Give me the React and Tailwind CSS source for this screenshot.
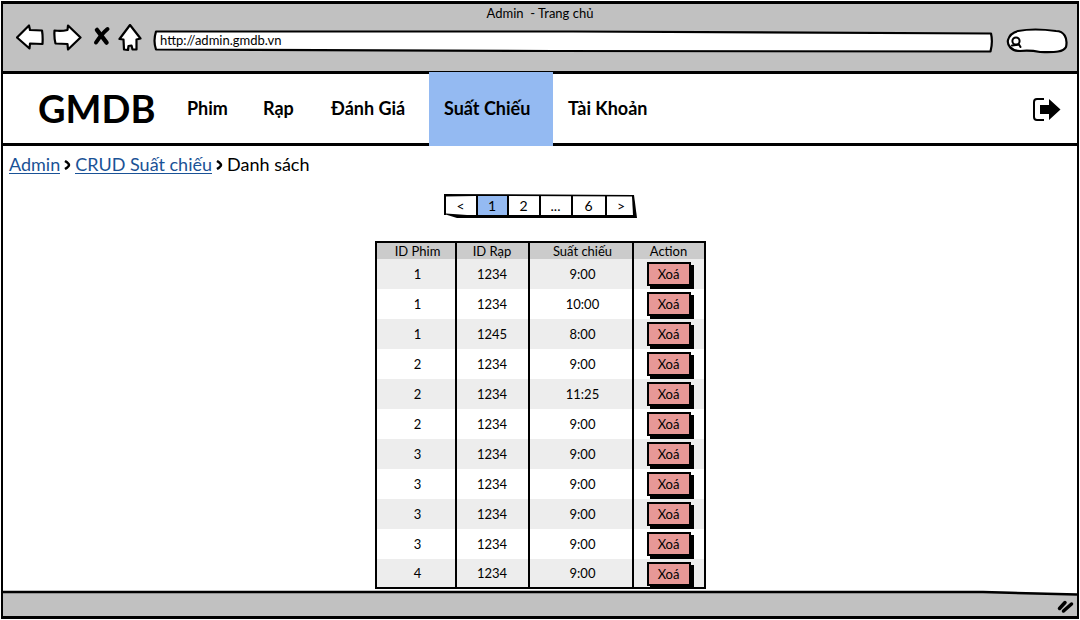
const pages = [
  { label: "<", width: "w-[32px]" },
  { label: "1", width: "w-[31px]", active: true },
  { label: "2", width: "w-[32px]" },
  { label: "...", width: "w-[32px]" },
  { label: "6", width: "w-[34px]" },
  { label: ">", width: "w-[31px]" },
];

const showings = [
  ["1", "1234", "9:00"],
  ["1", "1234", "10:00"],
  ["1", "1245", "8:00"],
  ["2", "1234", "9:00"],
  ["2", "1234", "11:25"],
  ["2", "1234", "9:00"],
  ["3", "1234", "9:00"],
  ["3", "1234", "9:00"],
  ["3", "1234", "9:00"],
  ["3", "1234", "9:00"],
  ["4", "1234", "9:00"],
];

const columnPadding = ["pl-1", "", "pl-1"];

const navItems = [
  { label: "Phim", width: "w-[76px]" },
  { label: "Rạp", width: "w-[68px]" },
  { label: "Đánh Giá", width: "w-[113px]" },
  { label: "Suất Chiếu", width: "w-[124px]", active: true },
  { label: "Tài Khoản", width: "w-[112px]" },
];

function ToolButton({ label, className, children }) {
  return (
    <button type="button" aria-label={label} className={`shrink-0 ${className}`}>
      {children}
    </button>
  );
}

function BrowserBar() {
  return (
    <header className="flex h-[70px] flex-col border-b-3 border-black bg-[#c1c1c1]">
      <h1 className="h-5 text-center text-[13px] leading-[18px] whitespace-pre">Admin  - Trang chủ</h1>
      <div className="flex items-start pr-[9px] pl-[13px]">
        <ToolButton label="Back" className="w-[28px]">
          <svg viewBox="0 0 28 28" className="block h-7 w-7" fill="#fff" stroke="#000" strokeWidth="2.2" strokeLinejoin="round">
            <path d="M1 13.500 13 1.500 14 6 26 6.500Q27 12 26.500 20L14 19.500 13.500 24.500Z" />
          </svg>
        </ToolButton>
        <ToolButton label="Forward" className="ml-[9px] w-[29px]">
          <svg viewBox="0 0 29 28" className="block h-7 w-[29px]" fill="#fff" stroke="#000" strokeWidth="2.2" strokeLinejoin="round">
            <path d="M1.500 6.500 Q8 7.500 14.500 6L15 1.500 27.500 13.500 15 25.500 14.500 20 2.500 19.500Q1 14 1.500 6.500Z" />
          </svg>
        </ToolButton>
        <ToolButton label="Stop" className="ml-[11px] w-[18px]">
          <svg viewBox="0 0 18 28" className="block h-7 w-[18px]" fill="none" stroke="#000" strokeLinecap="round">
            <path d="M4 6 13.500 18.500" strokeWidth="4.500" />
            <path d="M14.500 5Q9 9.500 3 18.500" strokeWidth="4" />
          </svg>
        </ToolButton>
        <ToolButton label="Home" className="ml-[7px] w-[24px]">
          <svg viewBox="0 0 24 28" className="block h-7 w-6" fill="#fff" stroke="#000" strokeWidth="2.2" strokeLinejoin="round">
            <path d="M12 1 1.500 15 5.500 15.500 6 25.500 10 26 10.500 22 13.500 21.500 14.500 25.500 18.500 25.500 18.500 15.500 22.500 14.500Z" />
          </svg>
        </ToolButton>
        <div className="relative mt-[6px] ml-[11px] h-[23px] flex-1">
          <svg viewBox="0 0 840 23" preserveAspectRatio="none" aria-hidden="true" className="absolute inset-0 h-full w-full">
            <path d="M3 1.500 420 1.500 838 3.500Q840 12 837.500 21.500L400 21 3 19.500Q0 11 3 1.500Z" fill="#fff" stroke="#000" strokeWidth="2.200" strokeLinejoin="round" />
          </svg>
          <input type="text" aria-label="Address" defaultValue="http://admin.gmdb.vn" className="relative block h-5 w-full bg-transparent pl-[7px] text-[13px] outline-none" />
        </div>
        <div className="relative mt-[4px] ml-[13px] h-[26px] w-[62px] shrink-0">
          <svg viewBox="0 0 62 26" aria-hidden="true" className="absolute inset-0 h-full w-full">
            <path d="M12 3Q28 0 50 3C58 3 62 10 60 19C57 25 46 24 34 24Q24 22 14 23C5 23 1 17 2 12Q4 5 12 3Z" fill="#fff" stroke="#000" strokeWidth="2.2" />
            <circle cx="10" cy="13" r="3.600" fill="none" stroke="#000" strokeWidth="2" />
            <path d="M6 17.500 13 16.500 14.500 19" fill="none" stroke="#000" strokeWidth="2" strokeLinecap="round" />
          </svg>
          <input type="search" aria-label="Search" className="relative block h-full w-full bg-transparent pr-2 pl-5 text-[13px] outline-none" />
        </div>
      </div>
    </header>
  );
}

function SiteNav() {
  return (
    <nav className="flex h-[72px] items-stretch border-b-3 border-black bg-white">
      <a href="#home" className="flex w-[169px] items-center pb-[2px] pl-[35px] text-[38px] leading-none font-bold">GMDB</a>
      {navItems.map((item) => (
        <a
          key={item.label}
          href="#section"
          className={`flex items-center pb-px pl-[15px] text-[18px] font-bold whitespace-nowrap ${item.width} ${item.active ? "-mt-[2px] -mb-[3px] bg-[#94baf2]" : ""}`}
        >
          {item.label}
        </a>
      ))}
      <button type="button" aria-label="Log out" className="mr-4 ml-auto">
        <svg viewBox="0 0 29 24" className="h-6 w-[29px]">
          <path d="M12 2H5Q2 2 2 5V20Q2 23 5 23H12" fill="none" stroke="#000" strokeWidth="2" />
          <path d="M8 8H17V2L28.500 12.500 17 23V17H8Z" />
        </svg>
      </button>
    </nav>
  );
}

function Breadcrumb() {
  return (
    <nav aria-label="Breadcrumb" className="flex h-9 items-center pl-[6px] text-[18px] leading-[18px]">
      <a href="#admin" className="border-b border-[#1a5296] text-[#1a5296]">Admin</a>
      <Chevron />
      <a href="#crud" className="border-b border-[#1a5296] text-[#1a5296]">CRUD Suất chiếu</a>
      <Chevron />
      <span>Danh sách</span>
    </nav>
  );
}

function Chevron() {
  return (
    <svg viewBox="0 0 7 10" aria-hidden="true" className="mx-1 mt-[2px] h-[10px] w-[7px]">
      <path d="M1 1Q5 3.500 5 5T1 9" fill="none" stroke="#000" strokeWidth="2.500" />
    </svg>
  );
}

function Pagination() {
  return (
    <div className="relative mt-[12px] flex h-[25px] w-[195px] pl-px">
      <svg viewBox="0 0 195 25" aria-hidden="true" className="absolute inset-0 h-full w-full">
        <path d="M1 0 191 1 194 24 14 24 1 20Z" />
        <path d="M3 2.500 33 2 189 2.500 190 21 24 21 3 19.500Z" fill="#fff" />
      </svg>
      {pages.map((page) => (
        <button
          key={page.label}
          type="button"
          className={`relative mt-[2px] h-[19px] border-l-2 border-black text-sm leading-[19px] first:border-l-0 ${page.width} ${page.active ? "bg-[#94baf2]" : ""}`}
        >
          {page.label}
        </button>
      ))}
    </div>
  );
}

function ShowingsTable() {
  return (
    <table className="mt-[22px] w-[331px] table-fixed border-separate border-spacing-0 border-2 border-black text-center text-[13px]">
      <colgroup>
        <col className="w-[80px]" />
        <col className="w-[73px]" />
        <col className="w-[104px]" />
        <col />
      </colgroup>
      <thead>
        <tr className="h-4 bg-[#cbcbcb] leading-4">
          {["ID Phim", "ID Rạp", "Suất chiếu"].map((title, column) => (
            <th key={title} className={`border-r-2 border-black py-0 pr-0 font-normal ${columnPadding[column]}`}>{title}</th>
          ))}
          <th className="p-0 font-normal">Action</th>
        </tr>
      </thead>
      <tbody>
        {showings.map((showing, index) => (
          <tr key={index} className="h-[30px] last:h-[28px] odd:bg-[#ededed] even:bg-white">
            {showing.map((value, column) => (
              <td key={column} className={`border-r-2 border-black pt-[2px] pr-0 pb-0 ${columnPadding[column]}`}>{value}</td>
            ))}
            <td className="p-0 pt-[3px] align-top">
              <button type="button" className="mx-auto block h-[24px] w-[44px] border-2 border-black bg-[#e79896] leading-none shadow-[3px_3px_0_#000]">
                Xoá
              </button>
            </td>
          </tr>
        ))}
      </tbody>
    </table>
  );
}

export default function App() {
  return (
    <div className="flex min-h-screen flex-col bg-white p-px font-['Lato','Liberation_Serif',serif] text-black">
      <div className="flex flex-1 flex-col border-2 border-t-3 border-b-3 border-black">
        <BrowserBar />
        <SiteNav />
        <main className="flex flex-1 flex-col">
          <Breadcrumb />
          <div className="flex flex-1 flex-col items-center">
            <Pagination />
            <ShowingsTable />
          </div>
        </main>
        <footer className="relative mt-px flex h-[26px] items-end justify-end bg-[#c1c1c1]">
          <svg viewBox="0 0 1074 6" preserveAspectRatio="none" aria-hidden="true" className="absolute inset-x-0 top-0 h-[6px] w-full">
            <path d="M0 0H1074V4L980 1H0Z" fill="#fff" />
            <path d="M0 2H980L1074 4.500" fill="none" stroke="#000" strokeWidth="2.500" />
          </svg>
          <svg viewBox="0 0 18 16" aria-hidden="true" className="mr-[2px] mb-[2px] h-4 w-[18px]" fill="none" stroke="#000" strokeWidth="3.500" strokeLinecap="round">
            <path d="M2.500 10.500 8 4.500M6.500 13 14.500 6" />
          </svg>
        </footer>
      </div>
    </div>
  );
}
